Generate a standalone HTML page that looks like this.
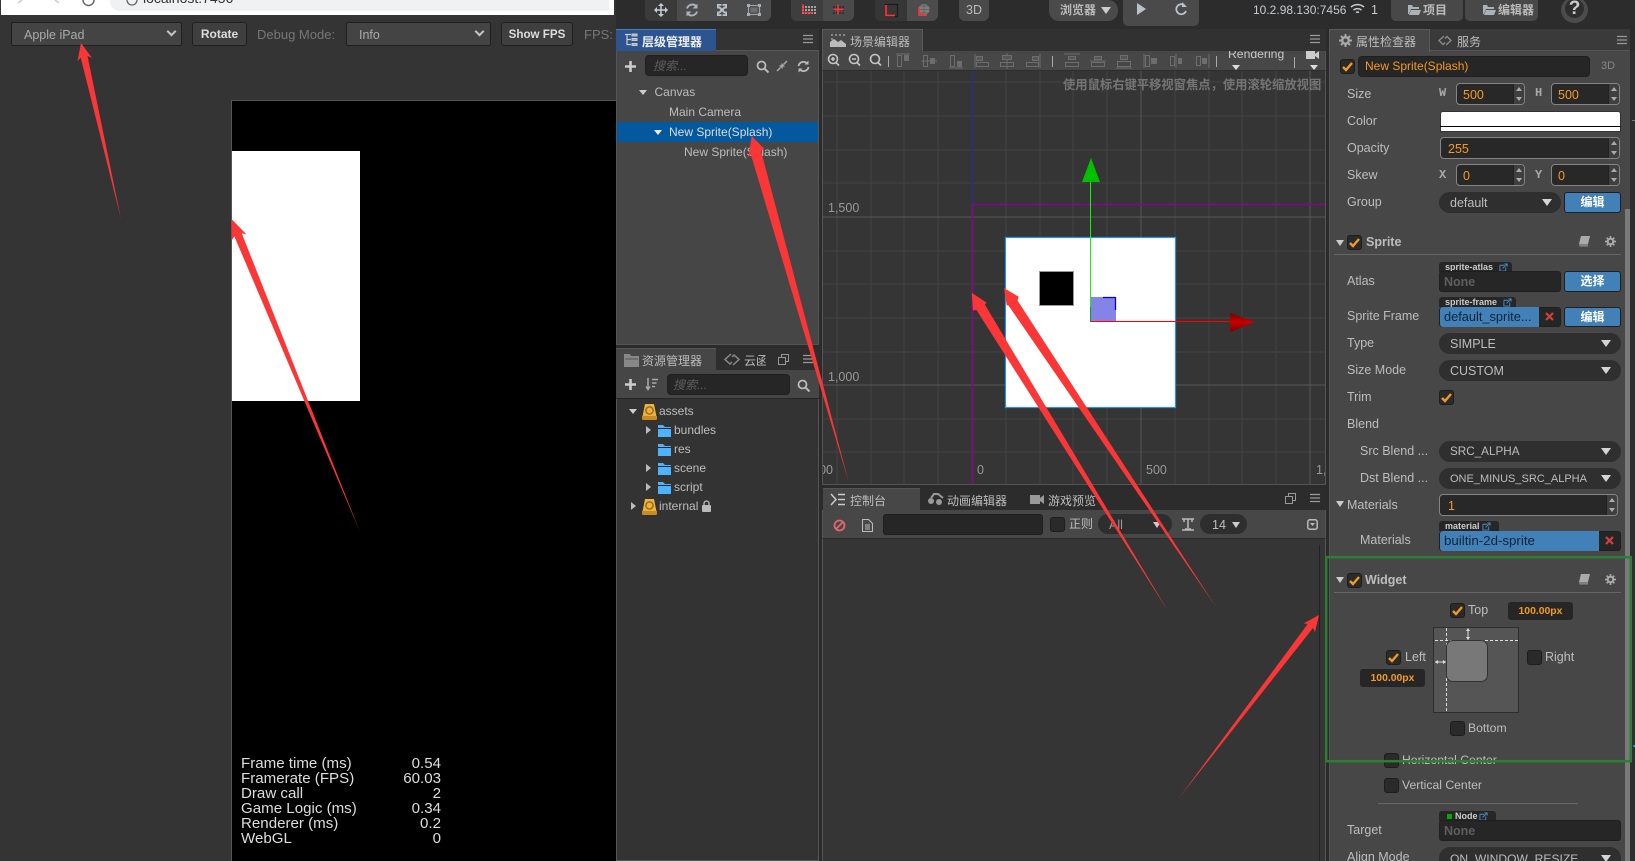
<!DOCTYPE html>
<html lang="zh"><head><meta charset="utf-8"><title>Cocos Creator</title>
<style>
html,body{margin:0;padding:0;background:#2b2b2b;width:1635px;height:861px;overflow:hidden}
body{position:relative;font-family:"Liberation Sans","Noto Sans CJK SC",sans-serif;font-size:12.5px;color:#bbb}
div,span,svg{position:absolute;box-sizing:border-box}
.t{white-space:nowrap;line-height:16px;color:#bdbdbd}
.n{font-size:12px}
.o{color:#f39a24}
.sel{background:#2f2f2f;border-radius:11px;height:21px;left:1439px;width:182px}
.inp{background:#262626;border:1px solid #1f1f1f;border-radius:3px}
.num{background:#282828;border:1px solid #858585;border-radius:4px}
.spin{right:0;top:0;bottom:0;width:11px;background:#3f3f3f;border-left:1px solid #222;border-radius:0 3px 3px 0}
.spin:before{content:"";position:absolute;left:2px;top:3px;border:3.5px solid transparent;border-top:0;border-bottom:4px solid #aaa}
.spin:after{content:"";position:absolute;left:2px;bottom:3px;border:3.5px solid transparent;border-bottom:0;border-top:4px solid #aaa}
.dn{width:0;height:0;border-left:5px solid transparent;border-right:5px solid transparent;border-top:7px solid #d5d5d5}
.sd{width:0;height:0;border-left:4.5px solid transparent;border-right:4.5px solid transparent;border-top:5px solid #ccc}
.rt{width:0;height:0;border-top:4.5px solid transparent;border-bottom:4.5px solid transparent;border-left:5px solid #bbb}
.cb{width:15px;height:15px;background:#2a2a2a;border:1px solid #1d1d1d;border-radius:3px}
.btn{background:#4281b8;border:1px solid #1f1f1f;border-radius:3px;color:#fff;font-weight:bold;font-size:12px;text-align:center;line-height:19px;left:1564px;width:57px;height:21px}
.tab{background:#262626;border-radius:3px 3px 0 0;height:10px;font-size:9px;font-weight:bold;color:#ccc;line-height:11px;padding-left:6px;white-space:nowrap}
.wb{background:#3f3f3f;border:1px solid #1f1f1f;border-radius:3px;height:24px}
.wsel{background:#444;border:1px solid #1f1f1f;border-radius:2px;height:24px;color:#aaa;line-height:24px;padding-left:12px}
.ws{width:7px;height:7px;border:solid #c4c4c4;border-width:0 2px 2px 0;transform:rotate(45deg)}
.wv{background:#262626;border-radius:3px;color:#f39a24;font-weight:bold;text-align:center;line-height:19px;height:18px;font-size:10.4px}
.lb{color:#aaa;font-family:"Liberation Mono",monospace;font-size:12px;font-weight:bold}
</style></head><body>
<svg width="0" height="0" style="left:0;top:0"><defs>
<symbol id="ck" viewBox="0 0 15 15"><path d="M3 8l3 3 6-7" fill="none" stroke="#f39a24" stroke-width="2.4"/></symbol>
<symbol id="mn" viewBox="0 0 12 10"><path d="M1 1.5h10M1 5h10M1 8.5h10" stroke="#999" stroke-width="1.3"/></symbol>
<symbol id="fd" viewBox="0 0 13 12"><path d="M0 0h5l2 2h6v10H0z" fill="#4db4fb"/><path d="M0 3.500h13" stroke="#12283a" stroke-width="1"/></symbol>
<symbol id="pk" viewBox="0 0 15 16"><path d="M3 0h9l3 15-1 1H1l-1-1z" fill="#efb13e"/><path d="M0 12h15v3l-1 1H1l-1-1z" fill="#c88c20"/><circle cx="7.5" cy="6.5" r="3.6" fill="none" stroke="#8c6516" stroke-width="1.3"/></symbol>
<symbol id="a1" viewBox="0 0 16 16"><path d="M1 1h14" stroke="#777"/><rect x="2.5" y="2.5" width="4" height="11" fill="none" stroke="#777"/><rect x="9" y="2" width="5" height="6" fill="#777"/></symbol>
<symbol id="a2" viewBox="0 0 16 16"><path d="M8 0v16" stroke="#777"/><rect x="3.5" y="2.5" width="9" height="4" fill="#5a5a5a" stroke="#777"/><rect x="1.5" y="9.5" width="13" height="4" fill="none" stroke="#777"/></symbol>
<symbol id="bk" viewBox="0 0 12 11"><path d="M3 0h9l-2 8H1z" fill="#aaa"/><path d="M1 8h9v2.6H1.5z" fill="#808080"/></symbol>
<symbol id="gr" viewBox="0 0 12 12"><circle cx="6" cy="6" r="3" fill="none" stroke="#aaa" stroke-width="2.2"/><path d="M6 0v2.5M6 9.500v2.500M0 6h2.500M9.500 6H12M1.800 1.800l1.800 1.800M8.400 8.400l1.800 1.800M1.800 10.200l1.800-1.800M8.400 3.600l1.800-1.800" stroke="#aaa" stroke-width="1.800"/></symbol>
<symbol id="sr" viewBox="0 0 13 13"><circle cx="5.500" cy="5.500" r="4" fill="none" stroke="#bbb" stroke-width="1.800"/><path d="M8.500 8.500l4 4" stroke="#bbb" stroke-width="2"/></symbol>
<symbol id="ex" viewBox="0 0 10 10"><path d="M1 2.500h5M1 2.500v6.500h6.500v-4M4 6l5-5M6 1h3v3" fill="none" stroke="#4a90c8" stroke-width="1"/></symbol>
</defs></svg>

<!-- left preview -->
<div style="left:0;top:0;width:616px;height:861px;background:#343434"></div>
<div style="left:1px;top:0;width:613px;height:15px;background:#fff"></div>
<div style="left:110px;top:0;width:499px;height:11px;background:#f0f1f3;border-radius:0 0 0 10px"></div>
<svg style="left:15px;top:0" width="130" height="14"><path d="M7 0L3 3" stroke="#ccc" stroke-width="1.500"/><path d="M40 0l4 3" stroke="#ccc" stroke-width="1.500"/><path d="M68 0a5 5 0 0 0 11 0" fill="none" stroke="#666" stroke-width="1.500"/><path d="M112 0a5 5 0 0 0 10 0" fill="none" stroke="#666" stroke-width="1.300"/></svg>
<div class="t" style="left:143px;top:-10px;font-size:14px;color:#333">localhost:7456</div>

<div class="wsel" style="left:11px;top:22px;width:171px">Apple iPad</div><div class="ws" style="left:168px;top:28px"></div>
<div class="wb" style="left:192px;top:22px;width:55px;color:#ddd;font-weight:bold;text-align:center;line-height:23px;font-size:12px">Rotate</div>
<div class="t" style="left:257px;top:27px;color:#777;font-size:13px">Debug Mode:</div>
<div class="wsel" style="left:346px;top:22px;width:145px">Info</div><div class="ws" style="left:476px;top:28px"></div>
<div class="wb" style="left:501px;top:22px;width:72px;color:#ddd;font-weight:bold;text-align:center;line-height:23px;font-size:11.600px">Show FPS</div>
<div class="t" style="left:584px;top:27px;color:#777;font-size:13px">FPS:</div>

<div style="left:231px;top:100px;width:385px;height:761px;background:#000;border-left:1px solid #555;border-top:1px solid #555"></div>
<div style="left:232px;top:151px;width:128px;height:250px;background:#fff"></div>
<div class="t" style="left:241px;top:756px;color:#ddd;font-size:15.100px;line-height:15px">Frame time (ms)<br>Framerate (FPS)<br>Draw call<br>Game Logic (ms)<br>Renderer (ms)<br>WebGL</div>
<div class="t" style="left:341px;width:100px;top:756px;color:#ddd;font-size:15.100px;line-height:15px;text-align:right">0.54<br>60.03<br>2<br>0.34<br>0.2<br>0</div>

<!-- top toolbar -->
<div style="left:616px;top:0;width:1019px;height:29px;background:#2c2c2c"></div>
<div style="left:645px;top:0;width:126px;height:21px;background:#4c4c4c;border-radius:0 0 6px 6px"></div>
<div style="left:645px;top:0;width:32px;height:21px;background:#3a3a3a;border-radius:0 0 0 6px"></div>
<div style="left:791px;top:0;width:63px;height:21px;background:#4a4a4a;border-radius:0 0 6px 6px"></div>
<div style="left:791px;top:0;width:32px;height:21px;background:#3e3e3e;border-radius:0 0 0 6px"></div>
<div style="left:875px;top:0;width:63px;height:21px;background:#4c4c4c;border-radius:0 0 6px 6px"></div>
<div style="left:875px;top:0;width:32px;height:21px;background:#363636;border-radius:0 0 0 6px"></div>
<div style="left:959px;top:0;width:30px;height:21px;background:#4a4a4a;border-radius:0 0 6px 6px;color:#bbb;text-align:center;line-height:20px;font-size:12.500px">3D</div>
<div style="left:1049px;top:0;width:69px;height:21px;background:#4a4a4a;border-radius:0 10px 10px 10px;color:#bbb;line-height:20px;font-size:12px;padding-left:11px;font-weight:bold">浏览器</div>
<div class="sd" style="left:1101px;top:7px;border-left-width:5px;border-right-width:5px;border-top-width:7px"></div>
<div style="left:1123px;top:0;width:76px;height:26px;background:#4a4a4a;border-radius:0 0 5px 5px"></div>
<svg style="left:640px;top:0" width="320" height="24" fill="none">
<path d="M21 5v10M16 10h10" stroke="#c4ced7" stroke-width="1.500"/><path d="M21 3l-3 3h6zM21 17l-3-3h6zM14 10l3-3v6zM28 10l-3-3v6z" fill="#c4ced7"/>
<path d="M47 8.500a5.500 5.500 0 0 1 9.500-2M57 11.500a5.500 5.500 0 0 1-9.500 2" stroke="#a9b3bc" stroke-width="1.900"/><path d="M57.500 3.500v5h-5zM46.500 16.500v-5h5z" fill="#a9b3bc"/>
<path d="M79 7l6 6M85 7l-6 6" stroke="#b9c1c9" stroke-width="2"/><path d="M77 4h4.500v1.800h-2.700v2.700H77zM87 4v4.500h-1.800V5.800h-2.700V4zM77 16v-4.500h1.800v2.700h2.700V16zM87 16h-4.500v-1.800h2.700v-2.700H87z" fill="#b9c1c9"/>
<rect x="108.500" y="5.500" width="11" height="9" stroke="#9aa2a9" stroke-width="1.200"/><rect x="110.500" y="7.500" width="7" height="5" fill="#6f6f6f"/><path d="M107 4h3v3h-3zM118 4h3v3h-3zM107 13h3v3h-3zM118 13h3v3h-3z" fill="#a6aeb5"/>
<path d="M162 7h14M162 10h14M162 13h14" stroke="#c4c4c4" stroke-width="1.500" stroke-dasharray="2 1"/><path d="M163 4v8.500h10" stroke="#f33" stroke-width="1.500"/>
<path d="M193 7h12M193 10h12M193 13h12" stroke="#2b2b2b" stroke-width="1.500" stroke-dasharray="2 1"/><path d="M198 4.500v10M193.500 9.500h10" stroke="#f33" stroke-width="1.500"/>
<rect x="245.500" y="4.500" width="12" height="12" stroke="#1c1c1c" stroke-width="1.300"/><path d="M246 5v10.500h9" stroke="#f33" stroke-width="1.700"/>
<circle cx="284" cy="9.500" r="5.500" fill="#808080"/><path d="M278.500 9.500h11M284 4v11M280 6h8M280 13h8" stroke="#5c5c5c" stroke-width=".8"/><path d="M279 7v8h8" stroke="#f33" stroke-width="1.700"/>
</svg>
<svg style="left:1135px;top:0" width="55" height="18"><path d="M2 3l9 6-9 6z" fill="#b8c2cc"/><path d="M49 5a5 5 0 1 0 2 6" fill="none" stroke="#b8c2cc" stroke-width="1.800"/><path d="M47 2v5h5z" fill="#b8c2cc"/></svg>
<div class="t" style="left:1253px;top:2px;color:#c6ccd2;font-size:12px">10.2.98.130:7456</div>
<svg style="left:1350px;top:3px" width="16" height="13" fill="none" stroke="#c6ccd2" stroke-width="1.500"><path d="M1 4a10 10 0 0 1 13 0M3.500 7a6.500 6.500 0 0 1 8 0M6 9.500a3 3 0 0 1 3 0"/></svg>
<div class="t" style="left:1371px;top:2px;color:#c6ccd2">1</div>
<div style="left:1391px;top:0;width:72px;height:21px;background:#484848;border-radius:0 0 5px 5px;color:#bbb;font-size:12px;line-height:20px;padding-left:32px;font-weight:bold">项目</div>
<div style="left:1465px;top:0;width:73px;height:21px;background:#484848;border-radius:0 0 5px 5px;color:#bbb;font-size:12px;line-height:20px;padding-left:33px;font-weight:bold">编辑器</div>
<svg style="left:1408px;top:4px" width="120" height="12"><path d="M0 1h4l1 2h6v2H3l-2 5H0zM3 6h10l-2 5H1z" fill="#aab2ba"/><path d="M75 1h4l1 2h6v2h-8l-2 5h-1zM78 6h10l-2 5h-10z" fill="#aab2ba"/></svg>
<div style="left:1561px;top:-3px;width:27px;height:26px;border-radius:50%;background:#4c4c4c"></div>
<div style="left:1565px;top:-1px;width:19px;height:19px;border-radius:50%;background:#2e2e2e;color:#ccc;font-weight:bold;font-size:19px;line-height:20px;text-align:center">?</div>

<!-- hierarchy -->
<div style="left:616px;top:29px;width:203px;height:316px;background:#464646;border:1px solid #555;border-top:0"></div>
<div style="left:616px;top:29px;width:203px;height:21px;background:#333"></div>
<div style="left:616px;top:50px;width:203px;height:1px;background:#555"></div>
<div style="left:616px;top:29px;width:100px;height:22px;background:#2b5490;border-top:1px solid #3f7fc0"></div>
<svg style="left:624px;top:33px" width="14" height="14" fill="none" stroke="#ccc"><path d="M1 1.500h6M3 1.500V11.500h4M3 6.500h4" stroke-width="1.200"/><path d="M8 1h5v2H8zM8 5.500h5v2H8zM8 10.500h5v2H8z" fill="#aaa"/></svg>
<div class="t" style="left:642px;top:34px;font-size:12px;color:#eee;font-weight:bold">层级管理器</div>
<svg style="left:802px;top:34px" width="12" height="10"><use href="#mn"/></svg>
<svg style="left:625px;top:61px" width="11" height="11"><path d="M5.500 0v11M0 5.500h11" stroke="#ccc" stroke-width="2.600"/></svg>
<div class="inp" style="left:645px;top:55px;width:103px;height:21px;border-radius:4px"></div>
<div class="t" style="left:653px;top:58px;font-size:12px;font-style:italic;color:#5e5e5e">搜索...</div>
<svg style="left:756px;top:60px" width="13" height="13"><use href="#sr"/></svg>
<svg style="left:776px;top:60px" width="12" height="12"><path d="M1 11l3.500-3.500M11 1L7.500 4.500" stroke="#aaa" stroke-width="1.500"/><path d="M3 5.500L6.500 9 7 5zM9 6.500L5.500 3 5 7z" fill="#aaa"/></svg>
<svg style="left:797px;top:60px" width="13" height="13" fill="none" stroke="#bbb" stroke-width="1.800"><path d="M1.500 6a5 5 0 0 1 9-2M11.500 7a5 5 0 0 1-9 2"/><path d="M11.500 0.500v4h-4zM1.500 12.500v-4h4z" fill="#bbb" stroke="none"/></svg>
<div class="sd" style="left:639px;top:89.500px"></div><div class="t n" style="left:654.500px;top:84px">Canvas</div>
<div class="t n" style="left:669px;top:104px">Main Camera</div>
<div style="left:617px;top:122px;width:201px;height:19.500px;background:#04589d"></div>
<div class="sd" style="left:654px;top:129.500px;border-top-color:#eee"></div><div class="t n" style="left:669px;top:124px;color:#ddd">New Sprite(Splash)</div>
<div class="t n" style="left:684px;top:144px">New Sprite(Splash)</div>

<!-- assets -->
<div style="left:616px;top:348px;width:203px;height:513px;background:#333;border:1px solid #555;border-top:0"></div>
<div style="left:616px;top:348px;width:203px;height:22px;background:#2e2e2e"></div>
<div style="left:616px;top:370px;width:203px;height:29px;background:#464646;border-bottom:1px solid #262626"></div>
<div style="left:616px;top:348px;width:100px;height:23px;background:#464646;border-top:1px solid #555"></div>
<svg style="left:624px;top:354px" width="15" height="13"><path d="M0 0h6l1 2h8v11H0z" fill="#888"/><path d="M1 5h13" stroke="#555"/></svg>
<div class="t" style="left:642px;top:353px;font-size:12px;color:#bbb">资源管理器</div>
<svg style="left:724px;top:353px" width="16" height="13" fill="none" stroke="#888" stroke-width="1.500"><path d="M7 1L1 6.500 6 11l2-2M9 12l6-5.500L10 2 8 4"/></svg>
<div class="t" style="left:744px;top:353px;width:22px;overflow:hidden;font-size:12px;color:#bbb">云函数</div>
<svg style="left:778px;top:354px" width="11" height="11" fill="none" stroke="#999"><rect x="3.500" y=".5" width="7" height="7"/><rect x=".5" y="3.500" width="7" height="7" fill="#2e2e2e"/></svg>
<svg style="left:802px;top:354px" width="12" height="10"><use href="#mn"/></svg>
<svg style="left:625px;top:379px" width="11" height="11"><path d="M5.500 0v11M0 5.500h11" stroke="#ccc" stroke-width="2.600"/></svg>
<svg style="left:645px;top:378px" width="13" height="13" fill="none" stroke="#aaa" stroke-width="1.500"><path d="M3 0v11M1 8.500l2 3 2-3M7 1.500h6M7 5h4.500M7 8.500h3"/></svg>
<div class="inp" style="left:667px;top:374px;width:123px;height:21px;border-radius:4px"></div>
<div class="t" style="left:673px;top:377px;font-size:12px;font-style:italic;color:#5e5e5e">搜索...</div>
<svg style="left:797px;top:379px" width="13" height="13"><use href="#sr"/></svg>
<div class="sd" style="left:629px;top:408.500px"></div>
<svg style="left:642px;top:404px" width="15" height="16"><use href="#pk"/></svg><div class="t n" style="left:659px;top:403px">assets</div>
<div class="rt" style="left:646px;top:426px"></div><svg style="left:658px;top:425px" width="13" height="12"><use href="#fd"/></svg><div class="t n" style="left:674px;top:422px">bundles</div>
<svg style="left:658px;top:444px" width="13" height="12"><use href="#fd"/></svg><div class="t n" style="left:674px;top:441px">res</div>
<div class="rt" style="left:646px;top:464px"></div><svg style="left:658px;top:463px" width="13" height="12"><use href="#fd"/></svg><div class="t n" style="left:674px;top:460px">scene</div>
<div class="rt" style="left:646px;top:483px"></div><svg style="left:658px;top:482px" width="13" height="12"><use href="#fd"/></svg><div class="t n" style="left:674px;top:479px">script</div>
<div class="rt" style="left:631px;top:502px"></div><svg style="left:642px;top:499px" width="15" height="16"><use href="#pk"/></svg><div class="t n" style="left:659px;top:498px">internal</div>
<svg style="left:702px;top:500px" width="9" height="12"><path d="M2 5V3.500a2.500 2.500 0 0 1 5 0V5" fill="none" stroke="#bbb" stroke-width="1.300"/><rect y="5" width="9" height="7" rx="1" fill="#bbb"/></svg>

<!-- scene -->
<div style="left:822px;top:29px;width:504px;height:22px;background:#313131"></div>
<div style="left:822px;top:29px;width:101px;height:23px;background:#474747;border:1px solid #5a5a5a;border-bottom:0"></div>
<svg style="left:830px;top:33px" width="16" height="14"><path d="M1 1h2v2H1zM5 1h2v2H5zM9 1h2v2H9zM13 1h2v2h-2zM1 5h2v2H1z" fill="#888"/><path d="M0 14V9l4-3 4 3 3-2 5 4v3z" fill="#bbb"/></svg>
<div class="t" style="left:850px;top:34px;font-size:12px">场景编辑器</div>
<svg style="left:1309px;top:34px" width="12" height="10"><use href="#mn"/></svg>
<div style="left:822px;top:51px;width:504px;height:20px;background:#474747;border-bottom:1px solid #2e2e2e;border-left:1px solid #555;border-right:1px solid #555"></div>
<svg style="left:826px;top:53px" width="60" height="14" fill="none" stroke="#c5c5c5" stroke-width="1.600"><circle cx="7" cy="6" r="4.500"/><path d="M10 9.500l3 3M5 6h4M7 4v4"/><circle cx="28" cy="6" r="4.500"/><path d="M31 9.500l3 3M26 6h4"/><circle cx="49" cy="6" r="4.500"/><path d="M52 9.500l3 3"/></svg>
<div style="left:888px;top:56px;width:1px;height:11px;background:#aaa"></div>
<div style="left:0;top:0;opacity:.8">
<svg style="left:895px;top:53px" width="16" height="16"><use href="#a1"/></svg>
<svg style="left:921px;top:53px" width="16" height="16"><rect x="2.500" y="2.500" width="4" height="11" fill="none" stroke="#777"/><rect x="9" y="5" width="5" height="6" fill="#777"/><path d="M0 8h16" stroke="#777"/></svg>
<svg style="left:948px;top:53px" width="16" height="16"><path d="M1 15h14" stroke="#777"/><rect x="2.500" y="2.500" width="4" height="11" fill="none" stroke="#777"/><rect x="9" y="8" width="5" height="6" fill="#777"/></svg>
<svg style="left:974px;top:53px" width="16" height="16"><path d="M1 1v14" stroke="#777"/><rect x="2.500" y="3.500" width="6" height="4" fill="#5a5a5a" stroke="#777"/><rect x="2.500" y="9.500" width="12" height="4" fill="none" stroke="#777"/></svg>
<svg style="left:999px;top:53px" width="16" height="16"><use href="#a2"/></svg>
<svg style="left:1025px;top:53px" width="16" height="16"><path d="M15 1v14" stroke="#777"/><rect x="7.500" y="3.500" width="6" height="4" fill="#5a5a5a" stroke="#777"/><rect x="1.500" y="9.500" width="12" height="4" fill="none" stroke="#777"/></svg>
<svg style="left:1064px;top:53px" width="16" height="16"><path d="M0 1h16" stroke="#777"/><rect x="4.500" y="3.500" width="7" height="3" fill="#5a5a5a" stroke="#777"/><rect x="1.500" y="9.500" width="13" height="4" fill="none" stroke="#777"/></svg>
<svg style="left:1090px;top:53px" width="16" height="16"><path d="M0 8h16" stroke="#777"/><rect x="4.500" y="3.500" width="7" height="3" fill="#5a5a5a" stroke="#777"/><rect x="1.500" y="9.500" width="13" height="4" fill="none" stroke="#777"/></svg>
<svg style="left:1116px;top:53px" width="16" height="16"><path d="M0 15h16" stroke="#777"/><rect x="4.500" y="2.500" width="7" height="4" fill="#5a5a5a" stroke="#777"/><rect x="1.500" y="8.500" width="13" height="5" fill="none" stroke="#777"/></svg>
<svg style="left:1143px;top:53px" width="16" height="16"><path d="M1 1v14" stroke="#777"/><rect x="2.500" y="2.500" width="4" height="11" fill="none" stroke="#777"/><rect x="8" y="5" width="6" height="6" fill="#777"/></svg>
<svg style="left:1168px;top:53px" width="16" height="16"><path d="M8 1v14" stroke="#777"/><rect x="2.500" y="3.500" width="4" height="9" fill="none" stroke="#777"/><rect x="10" y="5" width="4" height="6" fill="#777"/></svg>
<svg style="left:1194px;top:53px" width="16" height="16"><path d="M15 1v14" stroke="#777"/><rect x="2.500" y="3.500" width="4" height="9" fill="none" stroke="#777"/><rect x="8" y="5" width="5" height="6" fill="#777"/></svg>
</div>
<div style="left:1052px;top:56px;width:1px;height:11px;background:#aaa"></div>
<div style="left:1216px;top:56px;width:1px;height:11px;background:#aaa"></div>
<div style="left:1226px;top:51px;width:60px;height:14px;overflow:hidden"><div class="t" style="left:2px;top:-5px;color:#c5c5c5;font-size:12.200px">Rendering</div></div>
<div class="sd" style="left:1232px;top:65px;border-top-color:#ddd"></div>
<div style="left:1294px;top:57px;width:1px;height:11px;background:#aaa"></div>
<svg style="left:1306px;top:51px" width="13" height="8"><path d="M0 0h9v8H0zM9 3l4-3v8l-4-3z" fill="#ccc"/></svg>
<div class="sd" style="left:1310px;top:65px;border-top-color:#ddd"></div>

<div style="left:822px;top:71px;width:504px;height:414px;background:#353535;border:1px solid #555;border-top:0;overflow:hidden"></div>
<svg style="left:823px;top:71px" width="502" height="413">
<defs><linearGradient id="rg" x1="0" y1="0" x2="0" y2="1"><stop offset="0" stop-color="#700"/><stop offset=".5" stop-color="#c80000"/><stop offset="1" stop-color="#700"/></linearGradient></defs>
<path d="M14 0v413M48 0v413M81 0v413M115 0v413M183 0v413M217 0v413M250 0v413M284 0v413M352 0v413M386 0v413M419 0v413M453 0v413M0 11h502M0 45h502M0 79h502M0 112h502M0 180h502M0 213h502M0 247h502M0 281h502M0 348h502M0 381h502" stroke="#424242" fill="none"/>
<path d="M318 0v413M487 0v413M0 146h502M0 314h502" stroke="#585858" fill="none"/>
<path d="M149.500 0v133" stroke="#2d2f78" stroke-width="1.500"/>
<path d="M149.500 413V133.500H502" stroke="#7a0f85" stroke-width="1.800" fill="none"/>
<rect x="182.500" y="166.500" width="170" height="170" fill="#fff" stroke="#2b93dc" stroke-width="1.200"/>
<rect x="216.500" y="200.500" width="34" height="34" fill="#000" stroke="#999"/>
<rect x="267" y="226" width="26" height="25" fill="#8484e8"/>
<path d="M280 226.500h12.500v12.500" fill="none" stroke="#0000d8" stroke-width="1.300"/>
<path d="M267.500 111v140" stroke="#00ff00"/><path d="M267.500 236v15" stroke="#07a030"/>
<path d="M268 250.500h140" stroke="#f00"/>
<path d="M268 87l9 24h-18z" fill="#00c000"/>
<path d="M407 242l25 9-25 10z" fill="url(#rg)"/>
</svg>
<div class="t" style="left:828px;top:200px;color:#999;font-size:12.500px">1,500</div>
<div class="t" style="left:828px;top:369px;color:#999;font-size:12.500px">1,000</div>
<div class="t" style="left:823px;top:462px;width:10px;overflow:hidden;direction:rtl;color:#999">00</div>
<div class="t" style="left:977px;top:462px;color:#999">0</div>
<div class="t" style="left:1146px;top:462px;color:#999">500</div>
<div class="t" style="left:1316px;top:462px;color:#999;width:9px;overflow:hidden">1,</div>
<div class="t" style="left:1063px;top:77px;color:#757575;font-size:12.300px;font-weight:bold">使用鼠标右键平移视窗焦点，使用滚轮缩放视图</div>

<!-- console -->
<div style="left:822px;top:488px;width:504px;height:22px;background:#2c2c2c"></div>
<div style="left:823px;top:488px;width:97px;height:23px;background:#474747;border-top:1px solid #555"></div>
<svg style="left:830px;top:493px" width="16" height="13" fill="none" stroke="#ccc" stroke-width="1.500"><path d="M1 1l5 5.500-5 5.500M8 1.500h7M8 6.500h7M8 11.500h7"/></svg>
<div class="t" style="left:850px;top:493px;font-size:12px">控制台</div>
<svg style="left:928px;top:493px" width="16" height="13"><circle cx="3" cy="8" r="3" fill="#999"/><circle cx="11" cy="9" r="3" fill="#999"/><path d="M3 5l3-4h4l5 4" fill="none" stroke="#999" stroke-width="2"/></svg>
<div class="t" style="left:947px;top:493px;font-size:12px">动画编辑器</div>
<svg style="left:1030px;top:494px" width="15" height="11"><path d="M0 1h10v9H0zM10 4l4-3v9l-4-3z" fill="#999"/></svg>
<div class="t" style="left:1048px;top:493px;font-size:12px">游戏预览</div>
<svg style="left:1285px;top:493px" width="11" height="11" fill="none" stroke="#999"><rect x="3.500" y=".5" width="7" height="7"/><rect x=".5" y="3.500" width="7" height="7" fill="#2c2c2c"/></svg>
<svg style="left:1309px;top:493px" width="12" height="10"><use href="#mn"/></svg>
<div style="left:822px;top:510px;width:504px;height:29px;background:#474747;border:1px solid #555;border-top:0;border-bottom:1px solid #2c2c2c"></div>
<div style="left:822px;top:539px;width:504px;height:322px;background:#353535;border-left:1px solid #555;border-right:1px solid #555"></div>
<div style="left:1319px;top:545px;width:1px;height:316px;background:#222"></div>
<svg style="left:833px;top:519px" width="13" height="13" fill="none" stroke="#e2686a" stroke-width="1.800"><circle cx="6.500" cy="6.500" r="5"/><path d="M3 10l7-7"/></svg>
<svg style="left:862px;top:519px" width="11" height="13" fill="none" stroke="#bbb" stroke-width="1.100"><path d="M.5.500h6l4 4v8H.5zM3 6h5M3 8h5M3 10h5"/></svg>
<div class="inp" style="left:883px;top:514px;width:160px;height:21px"></div>
<div class="cb" style="left:1050px;top:517px"></div>
<div class="t" style="left:1069px;top:516px;font-size:12px">正则</div>
<div style="left:1098px;top:514px;width:74px;height:20px;border-radius:10px;background:#2e2e2e"></div>
<div class="t" style="left:1109px;top:517px;color:#999">All</div>
<div class="sd" style="left:1153px;top:522px;border-top-width:6px"></div>
<svg style="left:1182px;top:518px" width="12" height="13"><path d="M0 1h12M6 1v9M3 11h6M2 4V1M10 4V1M0 12h12" stroke="#bbb" stroke-width="1.500" fill="none"/></svg>
<div style="left:1200px;top:514px;width:47px;height:20px;border-radius:10px;background:#2e2e2e"></div>
<div class="t" style="left:1212px;top:517px">14</div>
<div class="sd" style="left:1227px;top:522px;left:1232px;border-top-width:6px"></div>
<svg style="left:1307px;top:519px" width="11" height="11"><rect x=".8" y=".8" width="9.400" height="9.400" rx="2" fill="none" stroke="#bbb" stroke-width="1.500"/><path d="M3 4h5l-2.500 3z" fill="#bbb"/></svg>

<!-- inspector -->
<div style="left:1329px;top:29px;width:301px;height:832px;background:#474747;border-left:1px solid #555"></div>
<div style="left:1329px;top:29px;width:301px;height:22px;background:#3a3a3a;border-bottom:1px solid #555"></div>
<div style="left:1329px;top:29px;width:101px;height:23px;background:#474747;border:1px solid #5a5a5a;border-bottom:0"></div>
<svg style="left:1339px;top:34px" width="13" height="13"><use href="#gr"/></svg>
<div class="t" style="left:1356px;top:34px;font-size:12px">属性检查器</div>
<svg style="left:1438px;top:35px" width="14" height="11" fill="none" stroke="#888" stroke-width="1.400"><path d="M6 1L1 5.500 5 9.500l2-2M8 10l5-4.500L9 1.500 7 3.500"/></svg>
<div class="t" style="left:1457px;top:34px;font-size:12px">服务</div>
<svg style="left:1616px;top:35px" width="12" height="10"><use href="#mn"/></svg>
<div style="left:1625px;top:209px;width:5px;height:652px;background:#7a7a7a"></div>
<div style="left:1630px;top:51px;width:5px;height:810px;background:#2e2e2e"></div>
<div style="left:1632px;top:120px;width:3px;height:1px;background:#777"></div>
<div style="left:1633px;top:745px;width:2px;height:2px;background:#4682c0"></div>

<div class="cb" style="left:1340px;top:59px"><svg width="15" height="15" style="left:-1px;top:-1px"><use href="#ck"/></svg></div>
<div class="inp" style="left:1358px;top:56px;width:232px;height:21px;border-radius:4px"></div>
<div class="t o n" style="left:1365px;top:58px">New Sprite(Splash)</div>
<div class="t" style="left:1601px;top:58px;color:#888;font-size:11px">3D</div>

<div class="t" style="left:1347px;top:86px">Size</div>
<div class="t lb" style="left:1439px;top:85px">W</div>
<div class="num" style="left:1456px;top:83px;width:69px;height:22px"><div class="spin"></div></div><div class="t o" style="left:1463px;top:87px">500</div>
<div class="t lb" style="left:1535px;top:85px">H</div>
<div class="num" style="left:1551px;top:83px;width:69px;height:22px"><div class="spin"></div></div><div class="t o" style="left:1558px;top:87px">500</div>

<div class="t" style="left:1347px;top:113px">Color</div>
<div style="left:1440px;top:111px;width:181px;height:21px;background:#fff;border:1px solid #333;border-radius:3px 3px 0 0"></div>
<div style="left:1440px;top:126px;width:181px;height:1px;background:#000"></div>

<div class="t" style="left:1347px;top:140px">Opacity</div>
<div class="num" style="left:1440px;top:137px;width:180px;height:22px"><div class="spin"></div></div><div class="t o" style="left:1448px;top:141px">255</div>

<div class="t" style="left:1347px;top:167px">Skew</div>
<div class="t lb" style="left:1439px;top:167px">X</div>
<div class="num" style="left:1456px;top:164px;width:69px;height:22px"><div class="spin"></div></div><div class="t o" style="left:1463px;top:168px">0</div>
<div class="t lb" style="left:1535px;top:167px">Y</div>
<div class="num" style="left:1551px;top:164px;width:69px;height:22px"><div class="spin"></div></div><div class="t o" style="left:1558px;top:168px">0</div>

<div class="t" style="left:1347px;top:194px">Group</div>
<div class="sel" style="top:192px;width:122px"></div><div class="t" style="left:1450px;top:195px">default</div><div class="dn" style="left:1542px;top:199px"></div>
<div class="btn" style="top:192px">编辑</div>

<div class="sd" style="left:1336px;top:240px;border-top-width:6px"></div>
<div class="cb" style="left:1347px;top:235px"><svg width="15" height="15" style="left:-1px;top:-1px"><use href="#ck"/></svg></div>
<div class="t" style="left:1366px;top:234px;font-weight:bold">Sprite</div>
<svg style="left:1578px;top:236px" width="12" height="11"><use href="#bk"/></svg>
<svg style="left:1605px;top:236px" width="11" height="11"><use href="#gr"/></svg>
<div style="left:1334px;top:254px;width:287px;height:1px;background:#666"></div>

<div class="t" style="left:1347px;top:273px">Atlas</div>
<div class="tab" style="left:1439px;top:262px;width:73px">sprite-atlas</div><svg style="left:1499px;top:263px" width="9" height="9"><use href="#ex"/></svg>
<div class="inp" style="left:1439px;top:271px;width:122px;height:21px"></div><div class="t" style="left:1444px;top:274px;color:#5e5e5e;font-weight:bold">None</div>
<div class="btn" style="top:271px">选择</div>

<div class="t" style="left:1347px;top:308px">Sprite Frame</div>
<div class="tab" style="left:1439px;top:297px;width:77px">sprite-frame</div><svg style="left:1503px;top:298px" width="9" height="9"><use href="#ex"/></svg>
<div class="inp" style="left:1439px;top:307px;width:122px;height:20px"></div>
<div style="left:1440px;top:307px;width:99px;height:20px;background:#4281b8;border-radius:3px 0 0 3px"></div>
<div class="t" style="left:1444px;top:309px;color:#10243a;font-size:12.800px">default_sprite...</div>
<svg style="left:1545px;top:312px" width="9" height="9"><path d="M1 1l7 7M8 1L1 8" stroke="#d04040" stroke-width="2.200"/></svg>
<div class="btn" style="top:307px;height:20px">编辑</div>

<div class="t" style="left:1347px;top:335px">Type</div>
<div class="sel" style="top:333px"></div><div class="t" style="left:1450px;top:336px">SIMPLE</div><div class="dn" style="left:1601px;top:340px"></div>
<div class="t" style="left:1347px;top:362px">Size Mode</div>
<div class="sel" style="top:360px"></div><div class="t" style="left:1450px;top:363px">CUSTOM</div><div class="dn" style="left:1601px;top:367px"></div>
<div class="t" style="left:1347px;top:389px">Trim</div>
<div class="cb" style="left:1439px;top:390px"><svg width="15" height="15" style="left:-1px;top:-1px"><use href="#ck"/></svg></div>
<div class="t" style="left:1347px;top:416px">Blend</div>
<div class="t" style="left:1360px;top:443px">Src Blend ...</div>
<div class="sel" style="top:441px"></div><div class="t" style="left:1450px;top:444px;font-size:11.700px">SRC_ALPHA</div><div class="dn" style="left:1601px;top:448px"></div>
<div class="t" style="left:1360px;top:470px">Dst Blend ...</div>
<div class="sel" style="top:468px"></div><div class="t" style="left:1450px;top:471px;font-size:11px">ONE_MINUS_SRC_ALPHA</div><div class="dn" style="left:1601px;top:475px"></div>
<div class="sd" style="left:1336px;top:501px;border-top-width:6px"></div>
<div class="t" style="left:1347px;top:497px">Materials</div>
<div class="num" style="left:1439px;top:494px;width:179px;height:22px"><div class="spin"></div></div><div class="t o" style="left:1448px;top:498px">1</div>
<div class="t" style="left:1360px;top:532px">Materials</div>
<div class="tab" style="left:1439px;top:521px;width:60px">material</div><svg style="left:1482px;top:522px" width="9" height="9"><use href="#ex"/></svg>
<div class="inp" style="left:1439px;top:531px;width:182px;height:20px"></div>
<div style="left:1440px;top:531px;width:159px;height:20px;background:#4281b8;border-radius:3px 0 0 3px"></div>
<div class="t" style="left:1444px;top:533px;color:#10243a;font-size:13.300px">builtin-2d-sprite</div>
<svg style="left:1605px;top:536px" width="9" height="9"><path d="M1 1l7 7M8 1L1 8" stroke="#d04040" stroke-width="2.200"/></svg>

<div class="sd" style="left:1336px;top:577px;border-top-width:6px"></div>
<div class="cb" style="left:1347px;top:573px"><svg width="15" height="15" style="left:-1px;top:-1px"><use href="#ck"/></svg></div>
<div class="t" style="left:1365px;top:572px;font-weight:bold">Widget</div>
<svg style="left:1578px;top:574px" width="12" height="11"><use href="#bk"/></svg>
<svg style="left:1605px;top:574px" width="11" height="11"><use href="#gr"/></svg>
<div style="left:1334px;top:592px;width:287px;height:1px;background:#666"></div>

<div class="cb" style="left:1450px;top:603px"><svg width="15" height="15" style="left:-1px;top:-1px"><use href="#ck"/></svg></div>
<div class="t" style="left:1468px;top:602px">Top</div>
<div class="wv" style="left:1508px;top:602px;width:65px">100.00px</div>
<div style="left:1433px;top:627px;width:86px;height:86px;background:#555;border:1px solid #2e2e2e"></div>
<svg style="left:1433px;top:627px" width="86" height="86" fill="none"><path d="M2 13.500h83M13.500 1v84" stroke="#ddd" stroke-dasharray="3 2"/><path d="M35 2v11M2 35h11" stroke="#ddd"/><path d="M35 1l-2 3h4zM35 13l-2-3h4zM2 35l3-2v4zM13 35l-3-2v4z" fill="#ddd"/></svg>
<div style="left:1446px;top:640px;width:42px;height:42px;background:#787878;border:1px solid #333;border-radius:7px"></div>
<div class="cb" style="left:1386px;top:650px"><svg width="15" height="15" style="left:-1px;top:-1px"><use href="#ck"/></svg></div>
<div class="t" style="left:1405px;top:649px">Left</div>
<div class="wv" style="left:1360px;top:669px;width:65px">100.00px</div>
<div class="cb" style="left:1527px;top:650px"></div><div class="t" style="left:1545px;top:649px">Right</div>
<div class="cb" style="left:1450px;top:721px"></div><div class="t" style="left:1468px;top:720px;font-size:12.200px">Bottom</div>
<div class="cb" style="left:1384px;top:753px"></div><div class="t" style="left:1402px;top:752px;font-size:12.200px">Horizontal Center</div>
<div class="cb" style="left:1384px;top:778px"></div><div class="t" style="left:1402px;top:777px;font-size:12.200px">Vertical Center</div>
<div style="left:1378px;top:803px;width:200px;height:1px;background:#666"></div>
<div class="t" style="left:1347px;top:822px">Target</div>
<div class="tab" style="left:1439px;top:811px;width:57px;padding-left:16px">Node</div>
<div style="left:1447px;top:814px;width:5px;height:5px;background:#0a0"></div>
<svg style="left:1479px;top:812px" width="9" height="9"><use href="#ex"/></svg>
<div class="inp" style="left:1439px;top:820px;width:182px;height:21px"></div><div class="t" style="left:1444px;top:823px;color:#5e5e5e;font-weight:bold">None</div>
<div class="t" style="left:1347px;top:849px">Align Mode</div>
<div class="sel" style="top:847px;height:26px"></div><div class="t" style="left:1450px;top:851px;font-size:12.100px">ON_WINDOW_RESIZE</div><div class="dn" style="left:1601px;top:855px"></div>

<!-- overlays -->
<svg style="left:0;top:0;z-index:10" width="1635" height="861">
<rect x="1326.200" y="557.200" width="304.600" height="204" fill="none" stroke="#2f7d32" stroke-width="2.500"/>
<g fill="#fb3636">
<polygon points="81,43 92,58 87.500,56 121,219 80.700,57.500 77.500,61.300"/>
<polygon points="231.500,219 246.500,234.500 241.700,233.200 360,532 234.300,236.200 231.700,240.500"/>
<polygon points="751.700,136 764,148.500 761,151 849,483 751,155 748.500,157"/>
<polygon points="971.700,292.700 986.700,302.700 984.900,304.600 1168,611 976.300,309.800 973,310.700"/>
<polygon points="1004,288 1018.700,296.700 1017.500,300.500 1216,607 1008.500,305.500 1006.700,305"/>
<polygon points="1319,615 1315,632 1313,628 1179,798 1307.700,624 1303.700,623.400"/>
</g></svg>
</body></html>
